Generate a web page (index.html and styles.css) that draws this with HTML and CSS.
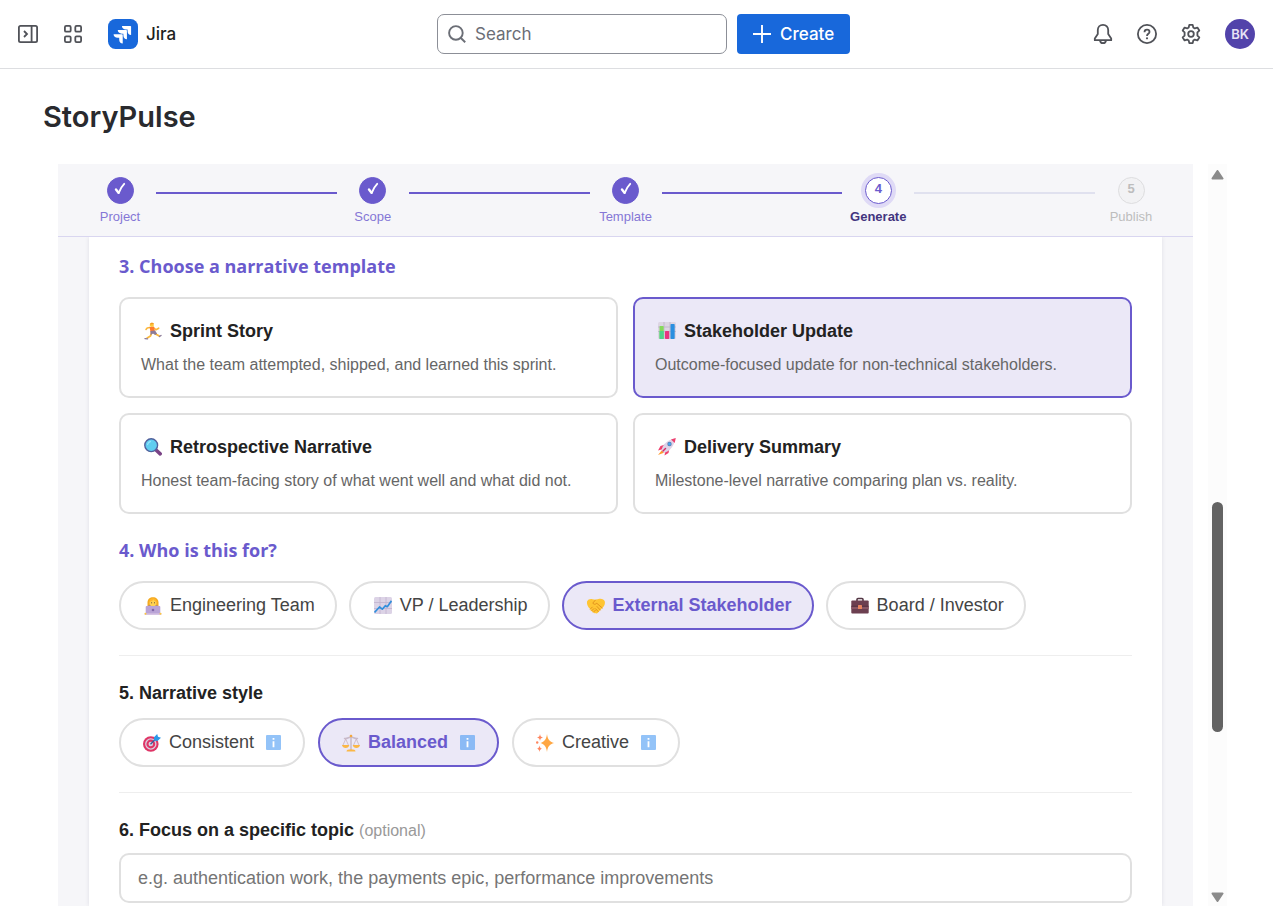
FILE: index.html
```html
<!DOCTYPE html>
<html lang="en">
<head>
    <meta charset="UTF-8">
    <meta name="viewport" content="width=device-width, initial-scale=1.0">
    <title>StoryPulse - Jira</title>
    <link rel="stylesheet" href="styles.css">
</head>
<body>

<header class="topbar">
    <div class="topbar-left">
        <button type="button" class="icon-btn" aria-label="Expand sidebar">
            <svg width="20" height="20" viewBox="0 0 20 20" fill="none" stroke="currentColor" stroke-width="1.8"><rect x=".9" y="1.9" width="18.2" height="16.2" rx="1.6"/><path d="M13.6 2v16M6 7l3 3-3 3"/></svg>
        </button>
        <button type="button" class="icon-btn" aria-label="Switch apps">
            <svg width="20" height="20" viewBox="0 0 20 20" fill="none" stroke="currentColor" stroke-width="1.8"><rect x="1.9" y="1.9" width="5.8" height="5.8" rx="1.3"/><rect x="12.3" y="1.9" width="5.8" height="5.8" rx="1.3"/><rect x="1.9" y="12.3" width="5.8" height="5.8" rx="1.3"/><rect x="12.3" y="12.3" width="5.8" height="5.8" rx="1.3"/></svg>
        </button>
        <a href="#" class="brand">
            <svg width="30" height="30" viewBox="0 0 24 24" aria-hidden="true"><rect width="24" height="24" rx="6" fill="#1868db"/><path fill="#fff" d="M8.967 15.06H7.712c-1.892 0-3.25-1.16-3.25-2.857h6.747c.35 0 .576.249.576.6v6.794c-1.696 0-2.818-1.357-2.818-3.25zm3.333-3.357h-1.255c-1.892 0-3.249-1.137-3.249-2.834h6.747c.35 0 .599.226.599.577v6.794c-1.696 0-2.842-1.357-2.842-3.25zm3.355-3.335h-1.254c-1.893 0-3.25-1.157-3.25-2.854h6.748c.35 0 .576.25.576.576v6.794c-1.696 0-2.82-1.357-2.82-3.25z"/></svg>
            <span>Jira</span>
        </a>
    </div>
    <div class="topbar-center">
        <label class="search">
            <svg width="20" height="20" viewBox="0 0 20 20" fill="none" stroke="currentColor" stroke-width="1.9" aria-hidden="true"><circle cx="8.9" cy="8.9" r="6.8"/><path d="M13.6 13.7l4.6 4.5"/></svg>
            <input type="search" placeholder="Search" aria-label="Search">
        </label>
        <button type="button" class="create-btn">
            <svg width="18" height="18" viewBox="0 0 18 18" fill="none" stroke="currentColor" stroke-width="1.9" aria-hidden="true"><path d="M9 0v18M0 9h18"/></svg>
            Create
        </button>
    </div>
    <div class="topbar-right">
        <button type="button" class="icon-btn" aria-label="Notifications">
            <svg width="20" height="20" viewBox="0 0 20 20" fill="none" stroke="currentColor" stroke-width="1.8" stroke-linejoin="round"><path d="M10 .9c-3.2 0-5.2 2.4-5.2 5.2V10l-3 4.5v1.7h16.4v-1.7l-3-4.500V6.100c0-2.800-2-5.200-5.200-5.200z"/><path d="M7 16.300c.2 1.800 1.400 2.800 3 2.800s2.800-1 3-2.800"/></svg>
        </button>
        <button type="button" class="icon-btn" aria-label="Help">
            <svg width="20" height="20" viewBox="0 0 20 20" fill="none" stroke="currentColor" stroke-width="1.8"><circle cx="10" cy="10" r="9.1"/><path d="M7.500 8.200c0-1.600 1.100-2.500 2.500-2.500s2.500.9 2.500 2.200c0 1.900-2.500 1.900-2.500 4"/><circle cx="10" cy="14.300" r="1.100" fill="currentColor" stroke="none"/></svg>
        </button>
        <button type="button" class="icon-btn" aria-label="Settings">
            <svg width="20" height="20" viewBox="0 0 20 20" fill="none" stroke="currentColor" stroke-width="1.8" stroke-linejoin="round"><path d="M8.300 .9h3.400l.6 2.600 1.500.9 2.600-.8 1.900 3-1.900 1.800v3.200l1.900 1.800-1.900 3-2.600-.8-1.500.9-.6 2.600H8.300l-.6-2.600-1.500-.9-2.600.8-1.900-3 1.900-1.800V8.400L1.700 6.600l1.900-3 2.600.8 1.500-.9z"/><circle cx="10" cy="10" r="2.800"/></svg>
        </button>
        <button type="button" class="avatar" aria-label="Account BK">BK</button>
    </div>
</header>

<main class="page">
    <h1>StoryPulse</h1>

    <div class="frame">
        <div class="wizard">
            <ol class="stepper">
                <li class="step done">
                    <span class="step-dot"><svg width="14" height="16" viewBox="0 0 14 16" fill="none" stroke="currentColor" stroke-linecap="round"><path d="M3 8.500l2.500 3.200" stroke-width="2.400"/><path d="M5.700 11.800C7 8.300 8.600 5.400 11.200 2.800" stroke-width="1.900"/></svg></span>
                    <span class="step-label">Project</span>
                </li>
                <li class="step-line done"></li>
                <li class="step done">
                    <span class="step-dot"><svg width="14" height="16" viewBox="0 0 14 16" fill="none" stroke="currentColor" stroke-linecap="round"><path d="M3 8.500l2.500 3.200" stroke-width="2.400"/><path d="M5.700 11.800C7 8.300 8.600 5.400 11.200 2.800" stroke-width="1.900"/></svg></span>
                    <span class="step-label">Scope</span>
                </li>
                <li class="step-line done"></li>
                <li class="step done">
                    <span class="step-dot"><svg width="14" height="16" viewBox="0 0 14 16" fill="none" stroke="currentColor" stroke-linecap="round"><path d="M3 8.500l2.500 3.200" stroke-width="2.400"/><path d="M5.700 11.800C7 8.300 8.600 5.400 11.200 2.800" stroke-width="1.900"/></svg></span>
                    <span class="step-label">Template</span>
                </li>
                <li class="step-line done"></li>
                <li class="step active">
                    <span class="step-dot">4</span>
                    <span class="step-label">Generate</span>
                </li>
                <li class="step-line"></li>
                <li class="step">
                    <span class="step-dot">5</span>
                    <span class="step-label">Publish</span>
                </li>
            </ol>

            <div class="panel">
                <h2>3. Choose a narrative template</h2>
                <div class="template-grid">
                    <button type="button" class="template-card">
                        <span class="template-name">
                            <svg class="emoji" viewBox="0 0 18 18" fill="none" stroke-linecap="round" stroke-linejoin="round"><path d="M7.500 11l-1 3-3.300 2" stroke="#fbb83c" stroke-width="1.800"/><path d="M9.500 10.500l3 2 2.700 1.500" stroke="#fbb83c" stroke-width="1.800"/><path d="M5.600 5.500L3.200 6 2 7.500M10 6l2 1.800 2.700-1.600" stroke="#fbb83c" stroke-width="1.600"/><path d="M5.500 5l4.500-.5 1 5.500-4.300.5z" fill="#ff7a2f"/><path d="M6.400 9l4.700-.4 2 3.100-2 1.300-2-1.500-2.500 1.500z" fill="#8c7b99"/><circle cx="7.800" cy="2.900" r="2.100" fill="#ffc83d"/><path d="M6 2.500C6.200.2 9.300 0 10 2z" fill="#f29d25"/><path d="M1 16.600l2.500.3M15.500 14.500l1.500-1" stroke="#8c7b99" stroke-width="1.400"/></svg>
                            Sprint Story
                        </span>
                        <span class="template-desc">What the team attempted, shipped, and learned this sprint.</span>
                    </button>
                    <button type="button" class="template-card selected">
                        <span class="template-name">
                            <svg class="emoji" viewBox="0 0 18 18"><rect width="18" height="17" rx="1.500" fill="#dcd5e3"/><path d="M0 5h18M0 9.500h18M6 0v17M12 0v17" stroke="#bdb2c8" stroke-width=".8"/><rect x="1.500" y="4" width="4.200" height="13" rx=".7" fill="#86d95c"/><rect x="1.500" y="9" width="4.200" height="8" fill="#4fd38b"/><rect x="7" y="9" width="4.200" height="8" rx=".7" fill="#e8357f"/><rect x="12.500" y="2" width="4.200" height="15" rx=".7" fill="#2a8fe0"/></svg>
                            Stakeholder Update
                        </span>
                        <span class="template-desc">Outcome-focused update for non-technical stakeholders.</span>
                    </button>
                    <button type="button" class="template-card">
                        <span class="template-name">
                            <svg class="emoji" viewBox="0 0 18 18"><path d="M11.500 11.500l4.700 4.300" stroke="#7a4386" stroke-width="3.600" stroke-linecap="round"/><circle cx="7.200" cy="7.200" r="6.400" fill="#5fcdf0" stroke="#50609c" stroke-width="1.400"/><path d="M3.600 6.500c.3-1.600 1.300-2.600 2.800-3" fill="none" stroke="#93e4fb" stroke-width="1.300" stroke-linecap="round"/></svg>
                            Retrospective Narrative
                        </span>
                        <span class="template-desc">Honest team-facing story of what went well and what did not.</span>
                    </button>
                    <button type="button" class="template-card">
                        <span class="template-name">
                            <svg class="emoji" viewBox="0 0 18 18"><path d="M4.500 11.500L0 17l6.500-2.500z" fill="#ff9b2e"/><path d="M7.200 6.500L2.500 8 0 12.500l4.500-1.200zM11.500 10.500L10.500 15 6.500 17.500l.8-4.200z" fill="#ef3f6e"/><path d="M3.500 12.500C4.500 6.500 9.500 1.500 17 .5 16.500 8 12 13 6 15z" fill="#ded3e8"/><path d="M13 1.500L17.800 0 16.700 5C15.500 4 14.300 2.700 13 1.500z" fill="#ef3f6e"/><circle cx="11.500" cy="6" r="2.200" fill="#5c7fb2"/><circle cx="11.500" cy="6" r="1.400" fill="#49a9ee"/><path d="M7.500 10.500l-2.500 2.500" stroke="#d62b65" stroke-width="1.500" stroke-linecap="round"/></svg>
                            Delivery Summary
                        </span>
                        <span class="template-desc">Milestone-level narrative comparing plan vs. reality.</span>
                    </button>
                </div>

                <h2>4. Who is this for?</h2>
                <div class="pills">
                    <button type="button" class="pill">
                        <svg class="emoji" viewBox="0 0 18 18"><path d="M3.500 9V5.500C3.500 2 6 .2 9 .2s5.500 2 5.500 5.300V9z" fill="#f4a91f"/><path d="M2.500 17V11c0-2 2-3 6.500-3s6.500 1 6.500 3v6z" fill="#8f7bb5"/><ellipse cx="9" cy="5.800" rx="3.500" ry="3.800" fill="#ffd250"/><path d="M5.300 4.800C7 4.800 9 3.500 9.500 2.300c.5 1.500 1.700 2.300 3.200 2.700C12.500 2.500 11 1.300 9 1.300S5.500 2.500 5.300 4.800z" fill="#ffb52b"/><path d="M7.600 5.800h.1M10.400 5.800h.1" stroke="#5a4137" stroke-linecap="round"/><rect x="1.700" y="9" width="14.600" height="8" rx="1" fill="#b9a3d6"/><circle cx="9" cy="13" r="1.300" fill="#8066a8"/><path d="M.7 17h16.600" stroke="#cfbadf" stroke-width="1.700"/><circle cx="1.500" cy="16.700" r="1" fill="#ffc83d"/><circle cx="16.500" cy="16.700" r="1" fill="#ffc83d"/></svg>
                        Engineering Team
                    </button>
                    <button type="button" class="pill">
                        <svg class="emoji" viewBox="0 0 18 18"><rect width="18" height="17" rx="1.500" fill="#dcd3e6"/><path d="M0 5.500h18M0 11.500h18M6 0v17M12 0v17" stroke="#c0b3ce" stroke-width=".8"/><path d="M.5 15.500L5.500 10l2.800 2.200 3-3.500 2 1L17.500 3.800" fill="none" stroke="#318edc" stroke-width="1.700" stroke-linejoin="round"/></svg>
                        VP / Leadership
                    </button>
                    <button type="button" class="pill selected">
                        <svg class="emoji" viewBox="0 0 18 18"><path d="M0 4.500C1 2.500 3 1.700 5.500 2.200l3 .6 3-.9c3-.6 5.500.2 6.300 2.600.5 2.500-.6 4.700-2.300 6.300l-4.600 5c-1 1.100-2.200.8-2.500.2-1 .4-1.700 0-2-.8-1 .1-1.700-.5-1.700-1.400-1.100-.1-1.600-.8-1.400-1.700C.8 10.500-.4 7 0 4.500z" fill="#ffc533"/><path d="M8.500 3L5.800 6c.7 1.700 2.500 1.600 4 .3l5.500 4.700M3.300 12.100l2-2M4.700 13.800l2.200-2.200M6.500 15.100l2-2M10 9.500l3.200 3.500M8.700 11.800l2.500 2.800" fill="none" stroke="#df8e1c" stroke-width=".9" stroke-linecap="round"/></svg>
                        External Stakeholder
                    </button>
                    <button type="button" class="pill">
                        <svg class="emoji" viewBox="0 0 18 18"><path d="M6 4V2.500c0-.6.400-1 1-1h4c.6 0 1 .4 1 1V4" fill="none" stroke="#543745" stroke-width="1.600"/><rect x=".3" y="3.500" width="17.400" height="13" rx="1" fill="#6c3f50"/><path d="M.3 9.500h17.400V12H.3z" fill="#8a5665"/><path d="M.3 9.300h17.400" stroke="#4d2b3a" stroke-width=".8"/><rect x="7" y="8" width="4" height="4" rx=".5" fill="#e7845f"/></svg>
                        Board / Investor
                    </button>
                </div>

                <hr>

                <h3>5. Narrative style</h3>
                <div class="pills style-pills">
                    <button type="button" class="pill">
                        <svg class="emoji" viewBox="0 0 18 18"><circle cx="7.800" cy="10" r="7.800" fill="#df3566"/><circle cx="7.800" cy="10" r="5.700" fill="#d9cfe0"/><circle cx="7.800" cy="10" r="4.400" fill="#df3566"/><circle cx="7.800" cy="10" r="2.300" fill="#d9cfe0"/><path d="M7.500 10.300l6.300-6.500" stroke="#365d99" stroke-width="1.300"/><path d="M11 6.500V3.200L14.200 0l.8 2.700L18 3.800 14.500 7z" fill="#2a98e8"/></svg>
                        Consistent
                        <svg class="info" viewBox="0 0 15 15"><rect width="15" height="15" rx="1" fill="#93c3f8"/><path d="M7.500 3v1.700M7.500 6.200v6" stroke="#fff" stroke-width="1.800"/></svg>
                    </button>
                    <button type="button" class="pill selected">
                        <svg class="emoji" viewBox="0 0 18 18" fill="none"><path d="M9 1.500v14M2.500 4.500C5 5 7 3 9 3s4 2 6.500 1.500" stroke="#c8bac9" stroke-width="1.500" stroke-linecap="round"/><path d="M3.700 5L.8 11.500h5.800zM14.300 5l-2.900 6.500h5.800z" stroke="#c9b3bf" stroke-width=".8"/><circle cx="9" cy="2" r="1.300" fill="#f4a83e"/><path d="M0 11h7.300c-.3 2-1.700 3-3.600 3S.3 13 0 11zM10.700 11H18c-.3 2-1.700 3-3.600 3s-3.400-1-3.700-3zM4.500 17.500c0-1.400 1.500-2.300 4.500-2.300s4.500.9 4.500 2.300z" fill="#fbb746"/></svg>
                        Balanced
                        <svg class="info" viewBox="0 0 15 15"><rect width="15" height="15" rx="1" fill="#8bbaf5"/><path d="M7.500 3v1.700M7.500 6.200v6" stroke="#fff" stroke-width="1.800"/></svg>
                    </button>
                    <button type="button" class="pill">
                        <svg class="emoji" viewBox="0 0 18 18"><path d="M11 0c.7 5.500 2.600 7.700 7 9-4.400 1.300-6.300 3.500-7 9-.7-5.500-2.600-7.700-6.500-9C8.400 7.700 10.300 5.500 11 0z" fill="#ffa743"/><path d="M4 0c.4 2.300 1 3 3 3.500-2 .5-2.600 1.200-3 3.500-.4-2.300-1-3-3-3.500C3 3 3.600 2.300 4 0zM3.500 11.500c.4 2.200 1 2.800 2.800 3.300-1.800.4-2.400 1-2.800 3.200-.4-2.200-1-2.800-2.800-3.200 1.800-.5 2.400-1.100 2.800-3.300z" fill="#ff865f"/><circle cx="1.200" cy="8.500" r="1.200" fill="#ff865f"/></svg>
                        Creative
                        <svg class="info" viewBox="0 0 15 15"><rect width="15" height="15" rx="1" fill="#93c3f8"/><path d="M7.500 3v1.700M7.500 6.200v6" stroke="#fff" stroke-width="1.800"/></svg>
                    </button>
                </div>

                <hr>

                <label class="topic-label" for="topic">6. Focus on a specific topic <span class="optional">(optional)</span></label>
                <input type="text" id="topic" class="topic-input" placeholder="e.g. authentication work, the payments epic, performance improvements">
            </div>
        </div>

        <div class="scrollbar" aria-hidden="true">
            <svg width="13" height="10" viewBox="0 0 13 10"><path d="M6.500 1L11.500 8.500H1.500z" fill="#8b8b8b" stroke="#8b8b8b" stroke-width="2" stroke-linejoin="round"/></svg>
            <div class="scroll-track">
                <div class="scroll-thumb"></div>
            </div>
            <svg width="13" height="10" viewBox="0 0 13 10"><path d="M6.500 9L11.500 1.500H1.500z" fill="#8b8b8b" stroke="#8b8b8b" stroke-width="2" stroke-linejoin="round"/></svg>
        </div>
    </div>
</main>

</body>
</html>
```
FILE: styles.css
```css
* {
    box-sizing: border-box;
}
body {
    margin: 0;
    height: 100vh;
    display: flex;
    flex-direction: column;
    overflow: hidden;
    background-color: #fff;
    color: #292a2e;
    font-family: "Liberation Sans", Arial, sans-serif;
}
button, input {
    font-family: inherit;
}
button {
    cursor: pointer;
}

/* top bar */
.topbar {
    display: flex;
    justify-content: space-between;
    align-items: center;
    padding: 14px 18px;
    border-bottom: 1px solid #dddee1;
    font-family: Inter, sans-serif;
}
.topbar-left, .topbar-center, .topbar-right {
    display: flex;
    align-items: center;
}
.topbar-left {
    gap: 25px;
    padding-right: 18px;
}
.topbar-center {
    gap: 10px;
}
.topbar-right {
    gap: 24px;
}
.icon-btn {
    display: flex;
    padding: 0;
    border: none;
    background: none;
    color: #505258;
}
.brand {
    display: flex;
    align-items: center;
    gap: 8px;
    color: #1e1f21;
    font-size: 17px;
    font-weight: 500;
    text-decoration: none;
}
.search {
    display: flex;
    align-items: center;
    gap: 8px;
    width: 290px;
    height: 40px;
    padding: 0 9px;
    border: 1px solid #8c8f97;
    border-radius: 7px;
    color: #6b6e76;
}
.search input {
    flex: 1;
    min-width: 0;
    padding: 0;
    border: none;
    outline: none;
    background: none;
    font-size: 17px;
}
.search input::placeholder {
    color: #6b6e76;
}
.create-btn {
    display: flex;
    align-items: center;
    gap: 9px;
    height: 40px;
    padding: 0 16px;
    border: none;
    border-radius: 4px;
    background-color: #1868db;
    color: #fff;
    font-size: 17px;
    font-weight: 500;
}
.avatar {
    width: 30px;
    height: 30px;
    padding: 0;
    border: none;
    border-radius: 50%;
    background-color: #5243aa;
    color: #e6e2f5;
    font-size: 13px;
    font-weight: 600;
}

/* page */
.page {
    flex: 1;
    min-height: 0;
    display: flex;
    flex-direction: column;
    padding: 28px 46px 2px 43px;
}
h1 {
    margin: 0 0 27px;
    font-family: Inter, sans-serif;
    font-size: 29px;
    line-height: 40px;
    font-weight: 600;
}
.frame {
    flex: 1;
    min-height: 0;
    display: flex;
    gap: 15px;
    padding-left: 15px;
}
.wizard {
    flex: 1;
    display: flex;
    flex-direction: column;
    overflow: hidden;
    background-color: #f6f6f9;
}

/* stepper */
.stepper {
    position: relative;
    display: flex;
    margin: 0;
    padding: 13px 26px 11px;
    border-bottom: 1px solid #d9d6f0;
    background-color: #f6f6f9;
    list-style: none;
}
.step {
    display: flex;
    flex-direction: column;
    align-items: center;
    gap: 5px;
    width: 72px;
    color: #bdbdbd;
}
.step-dot {
    display: flex;
    justify-content: center;
    width: 27px;
    height: 27px;
    border: 1px solid #dddddf;
    border-radius: 50%;
    background-color: #f2f2f4;
    font-size: 13px;
    font-weight: 700;
    line-height: 22px;
}
.step-dot svg {
    margin-top: 3px;
}
.step-label {
    font-size: 13px;
    line-height: 16px;
}
.step.done {
    color: #8576d6;
}
.step.done .step-dot {
    border-color: #6a5acd;
    background-color: #6a5acd;
    color: #fff;
}
.step.active {
    color: #42357f;
}
.step.active .step-label {
    font-weight: 700;
}
.step.active .step-dot {
    border-color: #6a5acd;
    background-color: #fff;
    box-shadow: 0 0 0 4px #dfdaf6;
    color: #6a5acd;
}
.step-line {
    flex: 1;
    height: 2px;
    margin-top: 15px;
    background-color: #e0e1ef;
}
.step-line.done {
    background-color: #6a5acd;
}

/* form panel */
.panel {
    flex: 1;
    margin: 0 31px;
    padding: 16px 30px 0;
    background-color: #fff;
    box-shadow: 0 0 4px rgba(60, 60, 90, 0.12);
}
h2 {
    margin: 23px 0 18px;
    color: #6a5acd;
    font-family: "Open Sans", sans-serif;
    font-size: 18px;
    line-height: 26px;
    font-weight: 700;
}
h2:first-child {
    margin-top: 0;
}
.template-grid {
    display: grid;
    grid-template-columns: 1fr 1fr;
    gap: 15px;
}
.template-card {
    display: flex;
    flex-direction: column;
    gap: 12px;
    padding: 20px 20px 21px;
    border: 2px solid #e0e0e0;
    border-radius: 10px;
    background-color: #fff;
    text-align: left;
}
.template-name {
    display: flex;
    align-items: center;
    color: #222;
    font-size: 18px;
    line-height: 24px;
    font-weight: 700;
}
.template-desc {
    color: #666;
    font-size: 16px;
    line-height: 20px;
}
.emoji {
    width: 18px;
    height: 18px;
    margin: 0 8px 0 3px;
}
.pills {
    display: flex;
    flex-wrap: wrap;
    gap: 12px;
}
.pill {
    display: flex;
    align-items: center;
    height: 49px;
    padding: 0 20px;
    border: 2px solid #e0e0e0;
    border-radius: 25px;
    background-color: #fff;
    color: #444;
    font-size: 18px;
}
.style-pills {
    gap: 13px;
}
.style-pills .pill {
    padding: 0 19px;
}
.info {
    width: 15px;
    height: 15px;
    margin: 0 3px 0 12px;
}
.selected {
    border-color: #6a5acd;
    background-color: #ebe8f7;
}
.pill.selected {
    color: #6a5acd;
    font-weight: 700;
}
hr {
    margin: 25px 0;
    border: none;
    border-top: 1px solid #eee;
}
h3, .topic-label {
    display: block;
    margin: 0 0 13px;
    color: #222;
    font-size: 18px;
    line-height: 24px;
    font-weight: 700;
}
.topic-label {
    margin-bottom: 10px;
}
.optional {
    color: #999;
    font-size: 16px;
    font-weight: 400;
}
.topic-input {
    width: 100%;
    height: 50px;
    padding: 0 17px;
    border: 2px solid #e0e0e0;
    border-radius: 10px;
    font-size: 18px;
}
.topic-input::placeholder {
    color: #757575;
}

/* scrollbar */
.scrollbar {
    display: flex;
    flex-direction: column;
    align-items: center;
    width: 19px;
    padding: 6px 0 4px;
    background-color: #fcfcfc;
}
.scroll-track {
    flex: 1;
    display: flex;
    flex-direction: column;
}
.scroll-track::before {
    content: "";
    flex: 322;
}
.scroll-track::after {
    content: "";
    flex: 160;
}
.scroll-thumb {
    flex: 230;
    width: 11px;
    border-radius: 6px;
    background-color: #636363;
}
```
